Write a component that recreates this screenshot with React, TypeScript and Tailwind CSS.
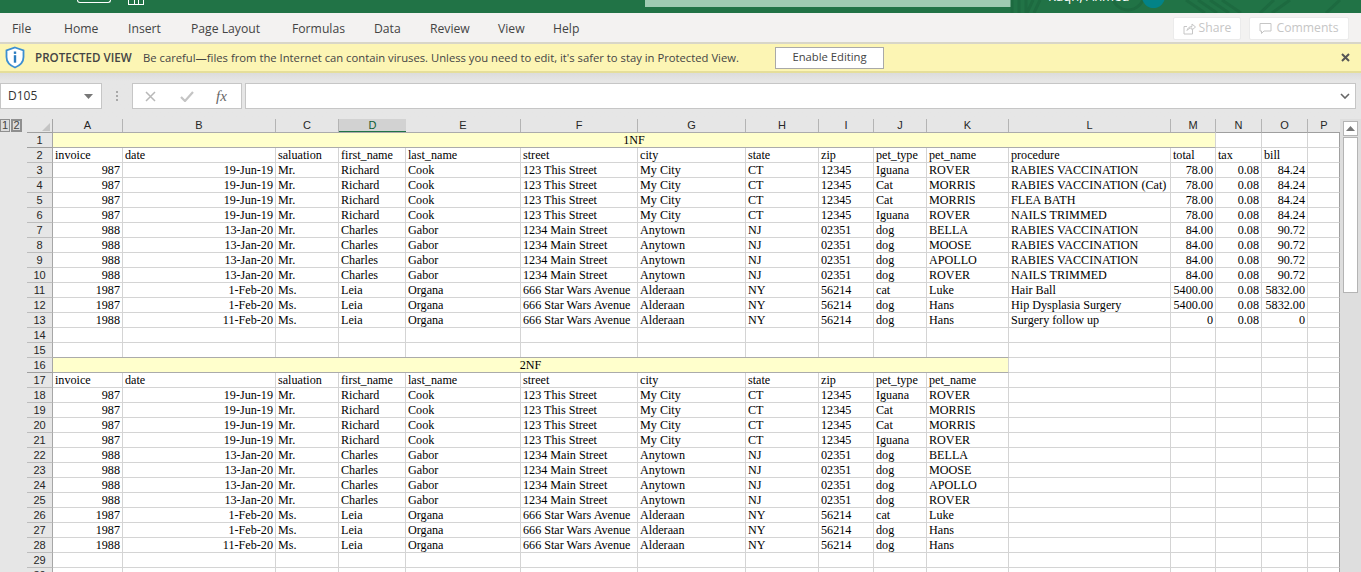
import React from 'react';

const cols = 'grid-cols-[70px_153px_63px_67px_115px_117px_108px_73px_55px_53px_82px_162px_45px_46px_46px_32px]';
const letters = ['A', 'B', 'C', 'D', 'E', 'F', 'G', 'H', 'I', 'J', 'K', 'L', 'M', 'N', 'O', 'P'];
const head = ['invoice', 'date', 'saluation', 'first_name', 'last_name', 'street', 'city', 'state', 'zip', 'pet_type', 'pet_name'];

const richard = ['19-Jun-19', 'Mr.', 'Richard', 'Cook', '123 This Street', 'My City', 'CT', '12345'];
const charles = ['13-Jan-20', 'Mr.', 'Charles', 'Gabor', '1234 Main Street', 'Anytown', 'NJ', '02351'];

const base: string[][] = [
  ['987', ...richard, 'Iguana', 'ROVER'],
  ['987', ...richard, 'Cat', 'MORRIS'],
  ['987', ...richard, 'Cat', 'MORRIS'],
  ['987', ...richard, 'Iguana', 'ROVER'],
  ['988', ...charles, 'dog', 'BELLA'],
  ['988', ...charles, 'dog', 'MOOSE'],
  ['988', ...charles, 'dog', 'APOLLO'],
  ['988', ...charles, 'dog', 'ROVER'],
  ['1987', '1-Feb-20', 'Ms.', 'Leia', 'Organa', '666 Star Wars Avenue', 'Alderaan', 'NY', '56214', 'cat', 'Luke'],
  ['1987', '1-Feb-20', 'Ms.', 'Leia', 'Organa', '666 Star Wars Avenue', 'Alderaan', 'NY', '56214', 'dog', 'Hans'],
  ['1988', '11-Feb-20', 'Ms.', 'Leia', 'Organa', '666 Star Wars Avenue', 'Alderaan', 'NY', '56214', 'dog', 'Hans'],
];

const extra: string[][] = [
  ['RABIES VACCINATION', '78.00', '0.08', '84.24'],
  ['RABIES VACCINATION (Cat)', '78.00', '0.08', '84.24'],
  ['FLEA BATH', '78.00', '0.08', '84.24'],
  ['NAILS TRIMMED', '78.00', '0.08', '84.24'],
  ['RABIES VACCINATION', '84.00', '0.08', '90.72'],
  ['RABIES VACCINATION', '84.00', '0.08', '90.72'],
  ['RABIES VACCINATION', '84.00', '0.08', '90.72'],
  ['NAILS TRIMMED', '84.00', '0.08', '90.72'],
  ['Hair Ball', '5400.00', '0.08', '5832.00'],
  ['Hip Dysplasia Surgery', '5400.00', '0.08', '5832.00'],
  ['Surgery follow up', '0', '0.08', '0'],
];

// columns holding right aligned values
const rightCols = [0, 1, 12, 13, 14];

function RowNum({ n, dark }: { n: number; dark?: boolean }) {
  return (
    <div className={`w-[26px] h-[15px] shrink-0 flex items-center justify-center bg-[#e6e6e6] border-r border-r-[#a6a6a6] border-b text-[11px] leading-none text-[#262626] font-['Liberation_Sans',sans-serif] ${dark ? 'border-b-[#9f9f9f]' : 'border-b-[#bdbdbd]'}`}>
      {n}
    </div>
  );
}

function Row({ n, values = [], right = true }: { n: number; values?: string[]; right?: boolean }) {
  return (
    <div className="flex h-[15px]">
      <RowNum n={n} />
      <div className={`grid ${cols} bg-white`}>
        {letters.map((_, i) => (
          <div
            key={i}
            className={`h-[15px] border-r border-b border-[#d4d4d4] px-[2px] text-[12.15px] leading-[14px] whitespace-nowrap text-black ${i === 15 ? 'border-r-[#a0a0a0]' : ''} ${right && rightCols.includes(i) ? 'text-right' : ''}`}
          >
            {values[i] ?? ''}
          </div>
        ))}
      </div>
    </div>
  );
}

function TitleRow({ n, label, span }: { n: number; label: string; span: 11 | 13 }) {
  const rest = letters.slice(span);
  return (
    <div className="flex h-[15px]">
      <RowNum n={n} dark />
      <div className={`grid ${cols} bg-white`}>
        <div className={`${span === 13 ? 'col-span-13' : 'col-span-11'} h-[16px] -mt-px border-t border-b border-r border-t-[#ababab] border-b-[#ababab] border-r-[#d4d4d4] bg-[#ffffcc] text-center text-[12.15px] leading-[15px] text-black`}>
          {label}
        </div>
        {rest.map((l) => (
          <div key={l} className={`h-[15px] border-r border-b border-[#d4d4d4] ${l === 'P' ? 'border-r-[#a0a0a0]' : ''}`} />
        ))}
      </div>
    </div>
  );
}

function ColumnHeader() {
  return (
    <div className="flex h-[14px]">
      <div className="w-[26px] shrink-0 border-r border-r-[#a6a6a6] border-b border-b-[#9f9f9f] flex items-end justify-end pr-[2px] pb-[1px]">
        <svg width="8" height="8" viewBox="0 0 8 8">
          <path d="M8 0V8H0Z" fill="#c4c4c4" />
        </svg>
      </div>
      <div className={`grid ${cols}`}>
        {letters.map((l) =>
          l === 'D' ? (
            <div key={l} className="h-[14px] bg-[#d2d2d2] border-b-2 border-[#217346] text-center text-[11px] leading-[13px] text-[#0f5c32] font-['Liberation_Sans',sans-serif]">
              {l}
            </div>
          ) : (
            <div key={l} className={`h-[14px] border-b border-b-[#9f9f9f] text-center text-[11px] leading-[13px] text-[#262626] font-['Liberation_Sans',sans-serif] ${l === 'P' ? '' : 'border-r border-r-[#b4b4b4]'}`}>
              {l}
            </div>
          )
        )}
      </div>
    </div>
  );
}

function TitleBar() {
  return (
    <div className="relative h-[13px] bg-[#217346] overflow-hidden flex shrink-0">
      <div className="ml-[77px] w-[34px] h-[3px] rounded-b-[4px] border-x border-b border-white" />
      <div className="ml-[17px] w-[16px] h-[5px] border-x border-b border-white flex justify-center">
        <div className="w-[5px] h-full border-x border-white" />
      </div>
      <div className="ml-[501px] w-[366px] h-[7px] bg-[#9fcbb2] pl-[4px]" />
      {/* background artwork of the title bar */}
      <svg className="absolute left-[1010px] top-0" width="351" height="13" viewBox="0 0 351 13">
        <g stroke="#1d6a40" strokeWidth="3" fill="none">
          <path d="M2 0V13M9 0V13M16 0V13M23 0L17 13M30 0L24 13" />
          <circle cx="118" cy="-6" r="16" />
          <path d="M176 0L195 13M188 0L207 13M200 0L219 13M212 0L231 13" />
          <path d="M264 0L250 13M280 0L262 13M330 0L316 13" />
        </g>
      </svg>
      <div className="absolute left-[1048px] -top-[12px] text-[13px] leading-[16px] text-white font-['Open_Sans',sans-serif]">Raqn, Ahmed</div>
      <div className="absolute left-[1142px] -top-[16px] w-[23px] h-[24px] rounded-full bg-[#038387]" />
    </div>
  );
}

function Ribbon() {
  return (
    <div className="h-[31px] shrink-0 bg-[#f3f2f1] border-b-2 border-[#d8d6c8] flex items-center text-[12.2px] text-[#444] font-['Open_Sans',sans-serif]">
      <div className="flex items-center pt-[4px]">
        <div className="w-[64px] pl-[12px]">File</div>
        <div className="w-[64px]">Home</div>
        <div className="w-[63px]">Insert</div>
        <div className="w-[101px]">Page Layout</div>
        <div className="w-[82px]">Formulas</div>
        <div className="w-[56px]">Data</div>
        <div className="w-[68px]">Review</div>
        <div className="w-[55px]">View</div>
        <div>Help</div>
      </div>
      <div className="ml-auto mr-[12px] mt-[1px] flex gap-[8px] text-[#c6c6c6]">
        <div className="w-[68px] h-[23px] pt-[1px] bg-white border border-[#ebebeb] rounded-[2px] flex items-center justify-center gap-[3px]">
          <svg width="13" height="13" viewBox="0 0 13 13" fill="none" stroke="#c6c6c6">
            <path d="M9.5 8V12H1V4.5H4" />
            <path d="M4 8.5C4.5 6 6.5 4.5 9 4.5V2L12.5 5L9 8V6C7 6 5 7 4 8.5Z" />
          </svg>
          Share
        </div>
        <div className="w-[100px] h-[23px] pt-[1px] bg-white border border-[#ebebeb] rounded-[2px] flex items-center justify-center gap-[4px]">
          <svg width="13" height="13" viewBox="0 0 13 13" fill="none" stroke="#c6c6c6">
            <path d="M1 1.5H12V9H5L2.5 11.5V9H1Z" />
          </svg>
          Comments
        </div>
      </div>
    </div>
  );
}

function ProtectedBar() {
  return (
    <div className="h-[29px] shrink-0 bg-[#fcf5b4] border-b-2 border-[#e5de9a] flex items-center text-[11.25px] text-[#444] font-['Open_Sans',sans-serif] pl-[5px]">
      <svg width="20" height="23" viewBox="0 0 20 23" fill="none">
        <path d="M10 1.5L18.5 4.5V11C18.5 16 15 19.5 10 21.5C5 19.5 1.5 16 1.5 11V4.5Z" fill="#fff" stroke="#3d8fd1" strokeWidth="1.8" />
        <rect x="8.8" y="5.5" width="2.4" height="2.4" fill="#2b7cc0" />
        <rect x="8.8" y="9.2" width="2.4" height="7.5" fill="#2b7cc0" />
      </svg>
      <span className="ml-[10px] mt-[1px] font-semibold text-[11.6px] w-[108px]">PROTECTED VIEW</span>
      <span className="mt-[1px] w-[632px] whitespace-nowrap">Be careful—files from the Internet can contain viruses. Unless you need to edit, it's safer to stay in Protected View.</span>
      <div className="w-[109px] h-[22px] bg-white border border-[#a9a9a9] flex items-center justify-center">Enable Editing</div>
      <svg className="ml-auto mr-[11px]" width="9" height="9" viewBox="0 0 9 9" stroke="#555" strokeWidth="2">
        <path d="M1 1L8 8M8 1L1 8" />
      </svg>
    </div>
  );
}

function FormulaBar() {
  return (
    <div className="h-[46px] shrink-0 flex items-start pt-[10px] pr-[5px] bg-gradient-to-b from-[#dcdcdc] to-[#e6e6e6] to-[8px]">
      <div className="w-[102px] h-[26px] bg-white border border-[#c6c6c6] flex items-center justify-between pl-[7px] pr-[8px] text-[12px] text-[#333] font-['Open_Sans',sans-serif]">
        D105
        <svg width="9" height="5" viewBox="0 0 9 5"><path d="M0 0H9L4.5 5Z" fill="#777" /></svg>
      </div>
      <div className="w-[30px] h-[26px] flex flex-col items-center justify-center gap-[2px]">
        <div className="w-[2px] h-[2px] bg-[#a8a8a8]" />
        <div className="w-[2px] h-[2px] bg-[#a8a8a8]" />
        <div className="w-[2px] h-[2px] bg-[#a8a8a8]" />
      </div>
      <div className="w-[110px] h-[26px] bg-white border border-[#c6c6c6] flex items-center pl-[12px]">
        <svg width="11" height="11" viewBox="0 0 11 11" stroke="#b8b8b8" strokeWidth="1.5"><path d="M1 1L10 10M10 1L1 10" /></svg>
        <svg className="ml-[24px]" width="14" height="11" viewBox="0 0 14 11" fill="none" stroke="#c4c4c4" strokeWidth="2.2"><path d="M1 6L5 10L13 1" /></svg>
        <span className="ml-[22px] text-[15px] italic text-[#666] font-['Liberation_Serif',serif]">fx</span>
      </div>
      <div className="ml-[3px] flex-1 h-[26px] bg-white border border-[#c6c6c6] flex items-center justify-end pr-[5px]">
        <svg width="10" height="6" viewBox="0 0 10 6" fill="none" stroke="#666" strokeWidth="1.6"><path d="M1 1L5 5L9 1" /></svg>
      </div>
    </div>
  );
}

function Gutter() {
  return (
    <div className="w-[27px] shrink-0 flex items-start gap-px pr-[5px]">
      <div className="w-[10px] h-[13px] border border-[#8f8f8f] bg-[#dcdcdc] text-[11px] leading-[11px] text-center text-[#444] font-['Liberation_Sans',sans-serif]">1</div>
      <div className="w-[11px] h-[13px] border-2 border-[#8f8f8f] bg-[#dcdcdc] text-[11px] leading-[9px] text-center text-[#444] font-['Liberation_Sans',sans-serif]">2</div>
    </div>
  );
}

function Scrollbar() {
  return (
    <div className="w-[21px] shrink-0 bg-[#dedede] pl-[3px] pr-[3px] pt-[2px] flex flex-col gap-[1px]">
      <div className="h-[15px] bg-white border border-[#b4b4b4] flex items-center justify-center">
        <svg width="9" height="5" viewBox="0 0 9 5"><path d="M4.5 0L9 5H0Z" fill="#777" /></svg>
      </div>
      <div className="h-[156px] bg-white border border-[#b4b4b4]" />
    </div>
  );
}

export default function App() {
  return (
    <div className="w-[1361px] h-[572px] overflow-hidden bg-[#e6e6e6] flex flex-col font-['Liberation_Serif',serif]">
      <TitleBar />
      <Ribbon />
      <ProtectedBar />
      <FormulaBar />
      <div className="flex flex-1 min-h-0">
        <Gutter />
        <div className="shrink-0">
          <ColumnHeader />
          <TitleRow n={1} label="1NF" span={13} />
          <Row n={2} right={false} values={[...head, 'procedure', 'total', 'tax', 'bill']} />
          {base.map((r, i) => (
            <Row key={i} n={i + 3} values={[...r, ...extra[i]]} />
          ))}
          <Row n={14} />
          <Row n={15} />
          <TitleRow n={16} label="2NF" span={11} />
          <Row n={17} right={false} values={head} />
          {base.map((r, i) => (
            <Row key={i} n={i + 18} values={r} />
          ))}
          <Row n={29} />
          <Row n={30} />
        </div>
        <Scrollbar />
      </div>
    </div>
  );
}
